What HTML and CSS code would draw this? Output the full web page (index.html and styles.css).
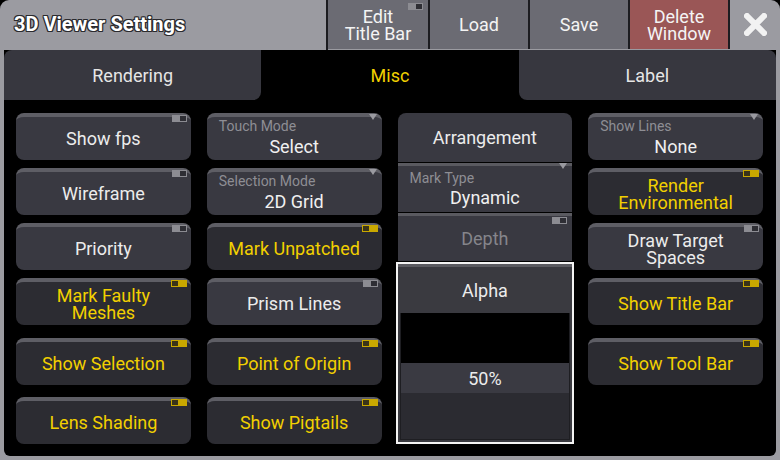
FILE: index.html
```html
<!DOCTYPE html>
<html>
<head>
<meta charset="utf-8">
<link rel="stylesheet" href="styles.css">
</head>
<body>
<div class="window">
  <header class="titlebar">
    <div class="title">3D Viewer Settings</div>
    <div class="tbtn edit">Edit<br>Title Bar<span class="tg off"></span></div>
    <div class="tbtn">Load</div>
    <div class="tbtn">Save</div>
    <div class="tbtn del">Delete<br>Window</div>
    <div class="close">
      <svg width="23" height="23" viewBox="0 0 23 23"><path d="M3 3 L20 20 M20 3 L3 20" stroke="#f2f2f2" stroke-width="6" stroke-linecap="square" fill="none"/></svg>
    </div>
  </header>
  <div class="panel">
    <nav class="tabs">
      <div class="tab first">Rendering</div>
      <div class="tab active">Misc</div>
      <div class="tab last">Label</div>
    </nav>
    <div class="grid">
      <div class="btn">Show fps<span class="tg off"></span></div>
      <div class="btn">Wireframe<span class="tg off"></span></div>
      <div class="btn">Priority<span class="tg off"></span></div>
      <div class="btn on two">Mark Faulty<br>Meshes<span class="tg on"></span></div>
      <div class="btn on">Show Selection<span class="tg on"></span></div>
      <div class="btn on">Lens Shading<span class="tg on"></span></div>

      <div class="btn dd"><span class="ddl">Touch Mode</span><span class="ddv">Select</span><span class="tri"></span></div>
      <div class="btn dd"><span class="ddl">Selection Mode</span><span class="ddv">2D Grid</span><span class="tri"></span></div>
      <div class="btn on">Mark Unpatched<span class="tg on"></span></div>
      <div class="btn">Prism Lines<span class="tg off"></span></div>
      <div class="btn on">Point of Origin<span class="tg on"></span></div>
      <div class="btn on">Show Pigtails<span class="tg on"></span></div>

      <div class="stack">
        <div class="sbtn arr">Arrangement</div>
        <div class="sbtn dd mt"><span class="ddl">Mark Type</span><span class="ddv">Dynamic</span><span class="tri"></span></div>
        <div class="sbtn depth">Depth<span class="tg off"></span></div>
        <div class="alpha">
          <div class="ahead">Alpha</div>
          <div class="fader">
            <div class="fblack"></div>
            <div class="fval">50%</div>
            <div class="fdark"></div>
          </div>
        </div>
      </div>

      <div class="btn dd"><span class="ddl">Show Lines</span><span class="ddv">None</span><span class="tri"></span></div>
      <div class="btn on two">Render<br>Environmental<span class="tg on"></span></div>
      <div class="btn two">Draw Target<br>Spaces<span class="tg off"></span></div>
      <div class="btn on">Show Title Bar<span class="tg on"></span></div>
      <div class="btn on">Show Tool Bar<span class="tg on"></span></div>
    </div>
  </div>
</div>
</body>
</html>
```
FILE: styles.css
```css
html, body {
  margin: 0;
  padding: 0;
  background: #000;
}
body {
  font-family: Roboto, "Liberation Sans", sans-serif;
  color: #ececec;
}
.window {
  width: 780px;
  height: 460px;
  background: #9b9ba1;
  border-radius: 9px 9px 0 0;
  display: flex;
  flex-direction: column;
  overflow: hidden;
}
.titlebar {
  height: 50px;
  display: flex;
  flex: none;
}
.title {
  flex: 1;
  font-weight: bold;
  font-size: 20px;
  color: #fff;
  padding: 12px 0 0 14px;
  box-sizing: border-box;
  text-shadow: -1px -1px 0 #2a2a2e, 1px -1px 0 #2a2a2e, -1px 1px 0 #2a2a2e, 1px 1px 0 #2a2a2e, 0 1px 0 #2a2a2e, 0 -1px 0 #2a2a2e, 1px 0 0 #2a2a2e, -1px 0 0 #2a2a2e;
  border-right: 2px solid #1c1c20;
}
.tbtn {
  width: 98px;
  height: 49px;
  background: #6b6b73;
  border-right: 2px solid #1c1c20;
  display: flex;
  align-items: center;
  justify-content: center;
  text-align: center;
  font-size: 18px;
  line-height: 17px;
  color: #f4f4f4;
  position: relative;
}
.tbtn.edit { width: 100px; }
.tbtn.edit .tg { top: 3px; right: 5px; }
.tbtn.del { background: #9a5656; }
.close {
  width: 50px;
  display: flex;
  align-items: center;
  justify-content: center;
  padding-bottom: 1px;
}
.panel {
  flex: 1;
  margin: 0 4px 4px 4px;
  background: #000;
  border-radius: 0 0 6px 6px;
  display: flex;
  flex-direction: column;
}
.tabs {
  display: flex;
  height: 50px;
  flex: none;
}
.tab {
  flex: 1;
  background: #37373f;
  display: flex;
  align-items: center;
  justify-content: center;
  font-size: 18px;
  color: #e6e6e6;
}
.tab.first { border-radius: 8px 0 8px 0; }
.tab.last { border-radius: 0 8px 0 8px; }
.tab.active { background: #000; color: #f2d000; }

.grid {
  display: grid;
  grid-template-columns: repeat(4, 1fr);
  grid-template-rows: 55px 55px 55px 60px 59px 47px;
  grid-auto-flow: column;
  column-gap: 16px;
  padding: 13px 13px 0 12px;
}
.btn {
  height: 47px;
  align-self: start;
  box-sizing: border-box;
  background: #393941;
  border-top: 4px solid #5e5e65;
  border-radius: 8px;
  position: relative;
  display: flex;
  flex-direction: column;
  align-items: center;
  justify-content: center;
  text-align: center;
  font-size: 18px;
  line-height: 17px;
  color: #ececec;
}
.btn.on {
  background: #2c2c32;
  color: #f2d000;
}
.tg {
  position: absolute;
  top: -2px;
  right: 4px;
  width: 15px;
  height: 7px;
  box-sizing: border-box;
  background: #8c8c92;
}
.tg::after {
  content: "";
  position: absolute;
  top: 1px;
  width: 6px;
  height: 5px;
  background: #2e2e34;
}
.tg.off::after { right: 1px; }
.tg.on { background: #c9a800; width: 16px; }
.tg.on::after { left: 1px; background: #3a3418; }

.dd {
  justify-content: flex-start;
  align-items: stretch;
}
.ddl {
  font-size: 14px;
  line-height: 14px;
  color: #8e8e94;
  text-align: left;
  padding: 2px 0 0 12px;
}
.ddv {
  font-size: 18px;
  line-height: 18px;
  color: #f0f0f0;
  text-align: center;
  margin-top: 5px;
}
.tri {
  position: absolute;
  top: -3px;
  right: 5px;
  width: 0;
  height: 0;
  border-left: 4px solid transparent;
  border-right: 4px solid transparent;
  border-top: 6px solid #9a9aa0;
}

.stack {
  grid-row: 1 / 7;
  display: flex;
  flex-direction: column;
}
.sbtn {
  background: #393941;
  position: relative;
  display: flex;
  flex-direction: column;
  align-items: center;
  justify-content: center;
  font-size: 18px;
  color: #ececec;
  box-sizing: border-box;
}
.sbtn.arr {
  height: 49px;
  border-radius: 8px 8px 0 0;
  margin-bottom: 1px;
}
.sbtn.mt {
  height: 49px;
  border-top: 3px solid #5a5a60;
  margin-bottom: 1px;
  justify-content: flex-start;
  align-items: stretch;
}
.sbtn.mt .ddl { padding-top: 5px; }
.sbtn.mt .ddv { margin-top: 4px; }
.sbtn.depth {
  height: 48px;
  border-top: 3px solid #5a5a60;
  color: #85858b;
  margin-bottom: 1px;
}
.sbtn.depth .tg { top: 1px; right: 5px; }
.alpha {
  height: 182px;
  box-sizing: border-box;
  border: 2px solid #f4f4f4;
  margin: 0 -2px;
  background: #3a3a40;
  display: flex;
  flex-direction: column;
}
.ahead {
  height: 49px;
  box-sizing: border-box;
  border-top: 3px solid #5b5b61;
  display: flex;
  align-items: center;
  justify-content: center;
  font-size: 18px;
  color: #ececec;
}
.fader {
  flex: 1;
  margin: 0 2px 2px 2px;
  border: 1px solid #1e1e22;
  border-top: none;
  display: flex;
  flex-direction: column;
}
.fblack { height: 50px; background: #000; }
.fval {
  height: 30px;
  background: #3a3a42;
  display: flex;
  align-items: center;
  justify-content: center;
  font-size: 18px;
  color: #ececec;
}
.fdark { flex: 1; background: #2b2b31; }
```
